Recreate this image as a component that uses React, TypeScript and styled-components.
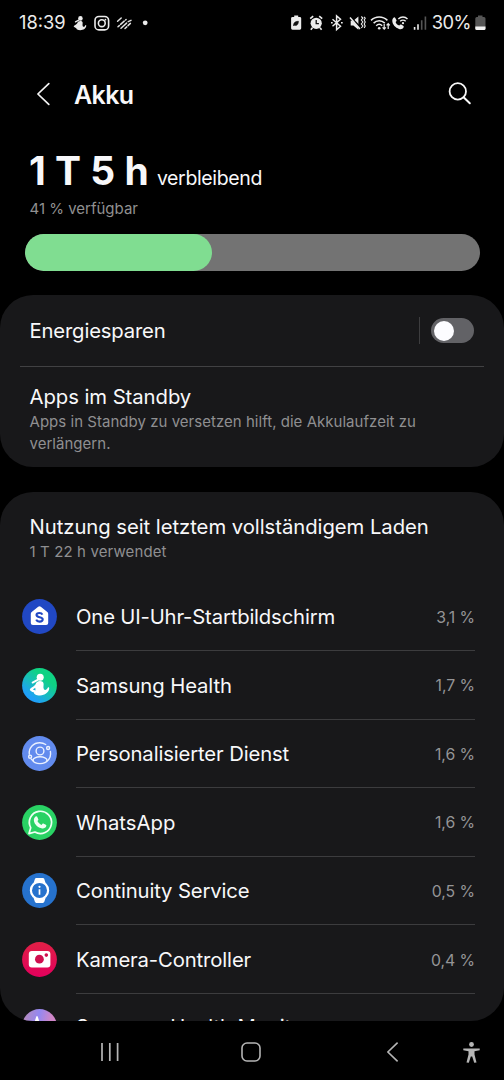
import React from 'react';
import styled, { createGlobalStyle } from 'styled-components';

const GlobalStyle = createGlobalStyle`
  * { box-sizing: border-box; }
  html, body { margin: 0; padding: 0; background: #000; }
  body {
    font-family: Inter, Roboto, "Liberation Sans", sans-serif;
    color: #f8f8fa;
    overflow: hidden;
  }
  svg { display: block; flex: none; }
`;

const Screen = styled.main`
  display: flex;
  flex-direction: column;
  width: 504px;
  height: 1080px;
  background: #000;
  overflow: hidden;
`;

const StatusBar = styled.header`
  display: flex;
  justify-content: space-between;
  align-items: center;
  height: 45px;
  padding: 0 18px 0 19px;
`;

const StatusGroup = styled.div<{ $gap: number }>`
  display: flex;
  align-items: center;
  gap: ${(p) => p.$gap}px;
`;

const StatusText = styled.span<{ $spacing: number }>`
  margin-bottom: 1px;
  font-size: 18.3px;
  line-height: 22px;
  letter-spacing: ${(p) => p.$spacing}px;
  color: #ececec;
`;

const TitleBar = styled.div`
  display: flex;
  align-items: center;
  height: 98px;
  padding: 0 32px 0 34px;
`;

const Title = styled.h1`
  flex: 1;
  margin: 1px 0 0 22px;
  font-size: 25px;
  line-height: 30px;
  font-weight: 600;
  letter-spacing: -0.6px;
`;

const Summary = styled.section`
  display: flex;
  flex-direction: column;
  height: 152px;
  padding: 4.5px 24.5px 0;
`;

const Remaining = styled.div`
  display: flex;
  align-items: baseline;
  gap: 9px;
  padding-left: 4.5px;
  line-height: 46px;
`;

const RemainingTime = styled.strong`
  font-size: 39px;
  font-weight: 700;
  letter-spacing: -0.9px;
  word-spacing: 1.8px;
`;

const RemainingLabel = styled.span`
  font-size: 19.5px;
  letter-spacing: -0.36px;
`;

const Available = styled.div`
  padding-left: 5px;
  margin-top: -1.5px;
  font-size: 15px;
  line-height: 20px;
  color: #909090;
`;

const Meter = styled.div`
  margin-top: 14.5px;
  width: 455px;
  height: 37px;
  border-radius: 19px;
  background: #737373;
  overflow: hidden;
`;

const MeterFill = styled.div`
  width: 41.1%;
  height: 100%;
  border-radius: 19px;
  background: #80dd91;
`;

const Card = styled.section<{ $height: number }>`
  flex: none;
  display: flex;
  flex-direction: column;
  height: ${(p) => p.$height}px;
  border-radius: 33px;
  background: #18181a;
  overflow: hidden;
`;

const SwitchRow = styled.div`
  display: flex;
  align-items: center;
  height: 71px;
  margin: 0 20px;
  padding: 0 10px 0 9.5px;
`;

const Rule = styled.div`
  height: 1px;
  margin: 0 20px;
  background: #414143;
`;

const Label = styled.div<{ $spacing?: number }>`
  flex: 1;
  font-size: 20.3px;
  line-height: 26px;
  letter-spacing: ${(p) => p.$spacing ?? 0}px;
  white-space: nowrap;
`;

const SwitchDivider = styled.div`
  width: 1px;
  height: 27px;
  margin-right: 11.5px;
  background: #3d3d3f;
`;

const Switch = styled.div`
  display: flex;
  align-items: center;
  width: 43px;
  height: 25px;
  padding-left: 2.5px;
  border-radius: 13px;
  background: #626266;
`;

const Knob = styled.div`
  width: 20px;
  height: 20px;
  border-radius: 50%;
  background: #fcfcff;
`;

const TextBlock = styled.div<{ $top: number }>`
  padding: ${(p) => p.$top}px 29.5px 0;
`;

const Caption = styled.div<{ $spacing?: number }>`
  margin-top: 1px;
  font-size: 15px;
  line-height: 21.5px;
  letter-spacing: ${(p) => p.$spacing ?? 0}px;
  color: #8f8f91;
`;

const Gap = styled.div`
  flex: none;
  height: 25px;
`;

const AppList = styled.div`
  margin-top: 20px;
`;

const AppRow = styled.div`
  display: flex;
  align-items: stretch;
  height: 68.55px;
  padding: 0 29px 0 21.5px;

  &:last-child {
    height: 66px;
  }
`;

const AppIcon = styled.div`
  display: flex;
  align-items: center;
  width: 54.5px;
`;

const AppBody = styled.div`
  flex: 1;
  display: flex;
  align-items: center;
  border-bottom: 1.5px solid #3c3c3e;
  padding-top: 2px;
`;

const Percent = styled.span`
  font-size: 15.8px;
  letter-spacing: -0.05px;
  color: #949496;
`;

const NavBar = styled.nav`
  flex: 1;
  display: grid;
  grid-template-columns: 101px 17px 123px 20px 126px 12px 64px 17px;
  align-items: center;
  padding-top: 3px;
`;

const SLOT = '0 0 35 35';

const LauncherIcon = () => (
  <svg width="35" height="35" viewBox={SLOT}>
    <circle cx="17.5" cy="17.5" r="17.4" fill="#2148c4" />
    <path d="M16.2 7.8q1.3-1.1 2.6 0l6.5 5.2q.9.8.9 1.9v9q0 2.1-2.1 2.1H10.9q-2.1 0-2.1-2.1v-9q0-1.1.9-1.9z" fill="#fff" />
    <path d="M20.4 15.6c-.5-1.1-1.6-1.6-2.9-1.6-1.8 0-3 .8-3 2.1 0 3 6.2 1.3 6.2 4.2 0 1.4-1.3 2.3-3.2 2.3-1.6 0-2.8-.7-3.3-1.9" fill="none" stroke="#2148c4" strokeWidth="2.1" />
  </svg>
);

const Runner = ({ fill, hole }: { fill: string; hole: string }) => (
  <g>
    <circle cx="18.2" cy="9.2" r="3.5" fill={fill} />
    <path d="M15.6 11.9 10.6 14.6" stroke={fill} strokeWidth="1.9" strokeLinecap="round" />
    <path d="M15 14C17 12.500 21 12.800 21.500 15.300C22 17.500 20.800 19.200 22 21.500C23.500 22.500 25 21.500 25.600 20C26 18.800 27.400 19.200 27.200 20.600C26.800 24.500 23 27.300 18 27.400C14 27.400 11.500 25.800 12 24.400C10 23.800 8 22.600 7.800 21.400C8 20.300 11 19 13 17C14 16 13.800 15 15 14z" fill={fill} />
    <path d="m10.8 21.500 2.500-1.700.2 2.700z" fill={hole} />
  </g>
);

const HealthIcon = () => (
  <svg width="35" height="35" viewBox={SLOT}>
    <defs>
      <linearGradient id="health" x1="0.2" y1="0.9" x2="0.8" y2="0.15">
        <stop offset="0.1" stopColor="#1fa0f8" />
        <stop offset="0.5" stopColor="#17c0b4" />
        <stop offset="0.8" stopColor="#0fd283" />
      </linearGradient>
    </defs>
    <circle cx="17.5" cy="17.5" r="17.4" fill="url(#health)" />
    <Runner fill="#fff" hole="#1bb2d2" />
  </svg>
);

const PersonIcon = () => (
  <svg width="35" height="35" viewBox={SLOT}>
    <circle cx="17.5" cy="17.5" r="17.4" fill="#628bee" />
    <g fill="none" stroke="#eaf1ff" strokeWidth="1.4" strokeLinecap="round">
      <circle cx="18" cy="15" r="3.9" />
      <ellipse cx="18" cy="24.2" rx="7" ry="3.4" />
      <path d="M7.3 18.2C6.5 11.5 11.6 6.8 17.8 6.8c2.3 0 4.2.6 5.9 1.7M28.4 15.4c.8 4.2-.8 7.9-3.7 10.1" />
      <path d="M9.4 23.2 11.3 25" />
      <circle cx="26.1" cy="12" r="1.5" />
      <circle cx="8.1" cy="20.7" r="1.5" />
    </g>
  </svg>
);

const WhatsAppIcon = () => (
  <svg width="35" height="35" viewBox={SLOT}>
    <circle cx="17.5" cy="17.5" r="17.4" fill="#29d264" />
    <path d="M7 28.6l1.7-5.9A11.1 11.1 0 1 1 12.9 27z" fill="none" stroke="#effff4" strokeWidth="1.7" strokeLinejoin="round" />
    <path d="M13.6 11.6c.5-.5 1.3-.4 1.6.2l1.1 2.4c.2.5 0 .9-.9 1.9.9 1.9 2.4 3.1 4.2 3.8.9-1.2 1.3-1.5 1.8-1.3l2.4 1.2c.6.3.6.8.4 1.5-.5 1.5-2.3 2.4-4 2.1-4.3-.8-7.8-4-8.3-7.7-.2-1.7.6-3.2 1.7-4.1z" fill="#effff4" />
  </svg>
);

const WatchIcon = () => (
  <svg width="35" height="35" viewBox={SLOT}>
    <circle cx="17.5" cy="17.5" r="17.4" fill="#2672cd" />
    <path d="M13 5.8q.3-.9 1.3-.9h6.6q1 0 1.3.9l1.4 4.1H11.6zM13 29.1q.3.8 1.3.8h6.6q1 0 1.3-.8l1.4-4.1H11.6z" fill="#fff" />
    <circle cx="17.5" cy="17.4" r="8.6" fill="#2672cd" stroke="#fff" strokeWidth="2.2" />
    <circle cx="17.5" cy="13.8" r="1.1" fill="#fff" />
    <path d="M17.5 16.2v5.6" stroke="#fff" strokeWidth="1.7" />
  </svg>
);

const CameraIcon = () => (
  <svg width="35" height="35" viewBox={SLOT}>
    <defs>
      <linearGradient id="camera" x1="0" y1="0" x2="0" y2="1">
        <stop offset="0" stopColor="#e02046" />
        <stop offset="1" stopColor="#e3005c" />
      </linearGradient>
    </defs>
    <circle cx="17.5" cy="17.5" r="17.4" fill="url(#camera)" />
    <rect x="6.8" y="9" width="21.6" height="16.4" rx="3" fill="#fff" />
    <circle cx="17.4" cy="17.2" r="4.4" fill="#cf0f4f" />
    <circle cx="24.3" cy="13.1" r="1.8" fill="#cf0f4f" />
  </svg>
);

const MonitorIcon = () => (
  <svg width="35" height="35" viewBox={SLOT}>
    <defs>
      <linearGradient id="monitor" x1="0" y1="0" x2="1" y2="0.2">
        <stop offset="0.1" stopColor="#b48ac0" />
        <stop offset="0.5" stopColor="#9388f2" />
        <stop offset="0.85" stopColor="#cf86c8" />
      </linearGradient>
    </defs>
    <circle cx="17.5" cy="17.5" r="17.4" fill="url(#monitor)" />
    <path d="M12 15 14.2 7.7q.8-1.6 1.6 0L18 15z" fill="#fff" />
  </svg>
);

const apps = [
  { name: 'One UI-Uhr-Startbildschirm', percent: '3,1 %', spacing: -0.17, icon: <LauncherIcon /> },
  { name: 'Samsung Health', percent: '1,7 %', spacing: -0.1, icon: <HealthIcon /> },
  { name: 'Personalisierter Dienst', percent: '1,6 %', spacing: -0.13, icon: <PersonIcon /> },
  { name: 'WhatsApp', percent: '1,6 %', spacing: 0, icon: <WhatsAppIcon /> },
  { name: 'Continuity Service', percent: '0,5 %', spacing: -0.15, icon: <WatchIcon /> },
  { name: 'Kamera-Controller', percent: '0,4 %', spacing: -0.13, icon: <CameraIcon /> },
  { name: 'Samsung Health Monitor', percent: '', spacing: -0.1, icon: <MonitorIcon /> },
];

const StatusLeftIcons = () => (
  <svg width="84" height="20" viewBox="0 0 84 20">
    <g transform="translate(0.6 -0.6) scale(0.65)">
      <Runner fill="#ececec" hole="#ececec" />
    </g>
    <g fill="none" stroke="#ececec" strokeWidth="1.6">
      <rect x="27" y="3.5" width="13.6" height="13.4" rx="4" />
      <circle cx="33.8" cy="10.2" r="3.4" />
    </g>
    <circle cx="37.4" cy="6.7" r=".9" fill="#ececec" />
    <path d="m49.6 8.200 3.600-3.200M50 13.700l1.300-1.100M52.600 11.400l3.600-3.300M57.600 7l.5-.5M53 15.300l5.600-5.200M60.200 8.600l2.800-1.200M57 15.500l1.800-1.600M60 12.600l2.400-2.200" stroke="#e0e0e0" strokeWidth="1.5" strokeLinecap="round" />
    <circle cx="77.2" cy="9.8" r="2.4" fill="#ececec" />
  </svg>
);

const StatusRightIcons = () => (
  <svg width="138" height="20" viewBox="0 0.5 138 20">
    <g fill="#ececec">
      <path d="M4.2 3h4v1.4h1.6q1.4 0 1.4 1.4v10q0 1.4-1.4 1.4H2.5q-1.4 0-1.4-1.4v-10q0-1.4 1.4-1.4h1.7z" />
      <circle cx="26.2" cy="10.8" r="5.6" />
      <path d="m20.2 6.2 3-2.6M32.2 6.2l-3-2.6M22.4 15.3l-1.6 2M30 15.3l1.6 2" stroke="#ececec" strokeWidth="1.6" />
      <path d="M60.7 8.2h2.7l5-4.1v13.2l-5-4.2h-2.7z" />
    </g>
    <path d="M3.5 13.5c-.1-3 1.2-4.7 5-4.7-.1 3-1.6 4.8-3.8 4.1" fill="#111" stroke="#111" strokeWidth=".5" />
    <path d="M26.2 7.6v3.5h2.7" fill="none" stroke="#111" strokeWidth="1.3" />
    <g fill="none" stroke="#ececec" strokeWidth="1.5">
      <path d="m42.5 6.8 8 7-3.9 3.4V3.4l3.9 3.4-8 7" />
      <path d="M41 10.3h1.700M51 10.3h1.700" />
      <path d="M60 4.2 72 16.8" stroke="#000" strokeWidth="2.2" />
      <path d="M60 5 70 16.4" />
      <path d="m71.3 4 1.6 1.5-1.6 2 1.6 2-1.6 2 1.6 2-1.6 2M74.2 4.4l1 1.4-1 1.6 1 2-1 2 1 2-1 2" strokeWidth="1.1" />
      <path d="M81 7.9c4.5-4.4 11.9-4.4 16.4 0M83.6 10.6c3.2-3.1 8-3.1 11.2 0M86.2 13.2c1.7-1.6 4.3-1.6 6 0" />
      <path d="M94.2 11.6v4.8M92.6 14.9l1.6 1.7 1.6-1.7M98.2 16.4v-5M96.6 12.8l1.6-1.7 1.6 1.7" strokeWidth="1.2" />
      <path d="M108.3 6.5c2.8-2.7 6.6-2.7 9.2 0M110.2 8.8c1.6-1.6 3.9-1.6 5.5 0" strokeWidth="1.4" />
    </g>
    <circle cx="89.2" cy="15.8" r="1.3" fill="#ececec" />
    <circle cx="113" cy="10.7" r="1.1" fill="#ececec" />
    <path d="M103.5 5.3c.5-.7 1.4-.7 1.8.1l1.1 2c.4.8.1 1.3-.8 2 .5 1.8 1.9 3 3.7 3.6.6-.9 1.2-1.3 1.9-.9l2 1.1c.7.5.7 1 .3 1.8-.7 1.5-2.6 2-4.5 1.4-3.6-1.1-6.4-4.3-6.7-7.6-.1-1.4.3-2.7 1.2-3.5z" fill="#ececec" />
    <path d="M124.600 14.600v2.600M128 11.800v5.400" stroke="#ececec" strokeWidth="1.6" />
    <path d="M131.7 7.8v9.4M135.4 4v13.2" stroke="#555" strokeWidth="1.6" />
  </svg>
);

const BatteryIcon = () => (
  <svg width="11" height="20" viewBox="0 0.5 11 20">
    <path d="M3 3h4.5v1.5H9q1.5 0 1.5 1.5v10q0 1.5-1.5 1.5H1.8Q.3 17.5.3 16V6q0-1.5 1.5-1.5H3z" fill="#555" />
    <path d="M.3 14h10.2v2q0 1.5-1.5 1.5H1.8Q.3 17.5.3 16z" fill="#f2f2f2" />
  </svg>
);

export default function App() {
  return (
    <Screen>
      <GlobalStyle />
      <StatusBar>
        <StatusGroup $gap={2.5}>
          <StatusText $spacing={0}>18:39</StatusText>
          <StatusLeftIcons />
        </StatusGroup>
        <StatusGroup $gap={4}>
          <StatusRightIcons />
          <StatusText $spacing={-0.5}>30%</StatusText>
          <BatteryIcon />
        </StatusGroup>
      </StatusBar>

      <TitleBar>
        <svg width="18" height="24" viewBox="0 0 18 24">
          <path d="M14.8 1.6 3.9 12l10.9 10.4" fill="none" stroke="#f4f4f4" strokeWidth="1.7" strokeLinecap="round" strokeLinejoin="round" />
        </svg>
        <Title>Akku</Title>
        <svg width="24" height="24" viewBox="0 0 24 24">
          <circle cx="9.8" cy="9.4" r="8.2" fill="none" stroke="#f8f8f8" strokeWidth="1.8" />
          <path d="m15.6 15.2 6.2 6" stroke="#f8f8f8" strokeWidth="2" strokeLinecap="round" />
        </svg>
      </TitleBar>

      <Summary>
        <Remaining>
          <RemainingTime>1 T 5 h</RemainingTime>
          <RemainingLabel>verbleibend</RemainingLabel>
        </Remaining>
        <Available>41 % verfügbar</Available>
        <Meter>
          <MeterFill />
        </Meter>
      </Summary>

      <Card $height={172}>
        <SwitchRow>
          <Label $spacing={-0.17}>Energiesparen</Label>
          <SwitchDivider />
          <Switch>
            <Knob />
          </Switch>
        </SwitchRow>
        <Rule />
        <TextBlock $top={17}>
          <Label $spacing={-0.06}>Apps im Standby</Label>
          <Caption $spacing={0.03}>
            Apps in Standby zu versetzen hilft, die Akkulaufzeit zu
            <br />
            verlängern.
          </Caption>
        </TextBlock>
      </Card>

      <Gap />

      <Card $height={529}>
        <TextBlock $top={22}>
          <Label $spacing={-0.05}>Nutzung seit letztem vollständigem Laden</Label>
          <Caption $spacing={0.12}>1 T 22 h verwendet</Caption>
        </TextBlock>
        <AppList>
          {apps.map((app) => (
            <AppRow key={app.name}>
              <AppIcon>{app.icon}</AppIcon>
              <AppBody>
                <Label $spacing={app.spacing}>{app.name}</Label>
                {app.percent && <Percent>{app.percent}</Percent>}
              </AppBody>
            </AppRow>
          ))}
        </AppList>
      </Card>

      <NavBar>
        <span />
        <svg width="19" height="20" viewBox="0 0 19 20">
          <path d="M1 1v18M8.8 1v18M16.6 1v18" stroke="#b5b5b5" strokeWidth="1.7" />
        </svg>
        <span />
        <svg width="20" height="20" viewBox="0 0 20 20">
          <rect x="1" y="1" width="18" height="18" rx="5" fill="none" stroke="#b5b5b5" strokeWidth="1.6" />
        </svg>
        <span />
        <svg width="12" height="20" viewBox="0 0 12 20">
          <path d="M10.6.7.9 10l9.7 9.3" fill="none" stroke="#b5b5b5" strokeWidth="1.6" />
        </svg>
        <span />
        <svg width="17" height="21" viewBox="0 0 17 21">
          <circle cx="8.5" cy="2.5" r="2.4" fill="#b5b5b5" />
          <path d="M.3 6.5h16.4v1.8l-5.2.9v3.2l2 8-2.3.4-2-6.3H7.8l-2 6.3-2.3-.4 2-8V9.2L.3 8.3z" fill="#b5b5b5" />
        </svg>
      </NavBar>
    </Screen>
  );
}
